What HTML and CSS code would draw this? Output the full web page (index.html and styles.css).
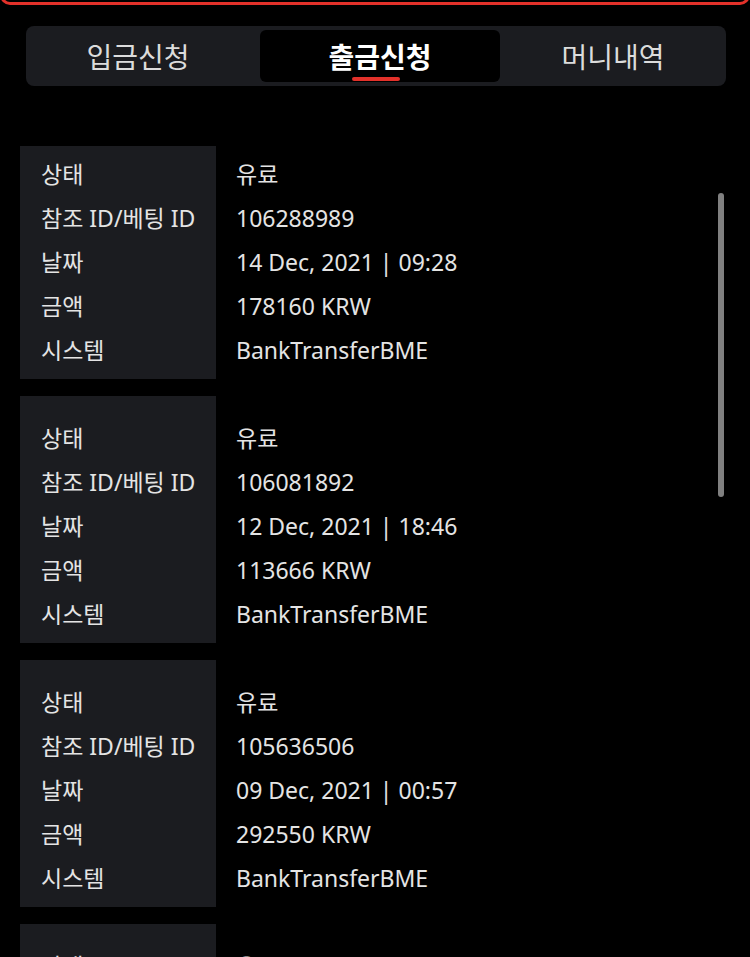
FILE: index.html
```html
<!DOCTYPE html>
<html lang="ko">
<head>
  <meta charset="UTF-8">
  <meta name="viewport" content="width=device-width, initial-scale=1.0">
  <title>출금신청</title>
  <link rel="stylesheet" href="styles.css">
</head>
<body>
  <div class="top-panel"></div>

  <nav class="tabs">
    <a class="tab tab-left">입금신청</a>
    <a class="tab active">출금신청</a>
    <a class="tab tab-right">머니내역</a>
  </nav>

  <div class="history">
    <div class="history-list">
      <div class="card">
        <div class="labels">
          <div>상태</div>
          <div>참조 ID/베팅 ID</div>
          <div>날짜</div>
          <div>금액</div>
          <div>시스템</div>
        </div>
        <div class="values">
          <div>유료</div>
          <div>106288989</div>
          <div>14 Dec, 2021 | 09:28</div>
          <div>178160 KRW</div>
          <div>BankTransferBME</div>
        </div>
      </div>

      <div class="card">
        <div class="labels">
          <div>상태</div>
          <div>참조 ID/베팅 ID</div>
          <div>날짜</div>
          <div>금액</div>
          <div>시스템</div>
        </div>
        <div class="values">
          <div>유료</div>
          <div>106081892</div>
          <div>12 Dec, 2021 | 18:46</div>
          <div>113666 KRW</div>
          <div>BankTransferBME</div>
        </div>
      </div>

      <div class="card">
        <div class="labels">
          <div>상태</div>
          <div>참조 ID/베팅 ID</div>
          <div>날짜</div>
          <div>금액</div>
          <div>시스템</div>
        </div>
        <div class="values">
          <div>유료</div>
          <div>105636506</div>
          <div>09 Dec, 2021 | 00:57</div>
          <div>292550 KRW</div>
          <div>BankTransferBME</div>
        </div>
      </div>

      <div class="card">
        <div class="labels">
          <div>상태</div>
          <div>참조 ID/베팅 ID</div>
          <div>날짜</div>
          <div>금액</div>
          <div>시스템</div>
        </div>
        <div class="values">
          <div>유료</div>
          <div>105412230</div>
          <div>07 Dec, 2021 | 21:14</div>
          <div>150000 KRW</div>
          <div>BankTransferBME</div>
        </div>
      </div>
    </div>
    <div class="scroll-thumb"></div>
  </div>
</body>
</html>
```

FILE: styles.css
```css
body {
  margin: 0;
  background: #000;
  color: #e4e4e4;
  font-family: "Noto Sans", "Noto Sans CJK KR", sans-serif;
  overflow: hidden;
}
.top-panel {
  height: 20px;
  margin-top: -21px;
  border: 3px solid #e3312a;
  border-radius: 0 0 10px 10px;
}
.tabs {
  display: grid;
  grid-template-columns: 230px 240px 1fr;
  height: 52px;
  margin: 21px 24px 0 26px;
  padding: 4px;
  background: #1b1c20;
  border-radius: 8px;
}
.tab {
  display: flex;
  align-items: center;
  justify-content: center;
  font-size: 28px;
  color: #dcdcdc;
  position: relative;
}
.tab-left {
  padding-right: 14px;
}
.tab-right {
  padding-left: 4px;
}
.tab.active {
  background: #000;
  border-radius: 6px;
  color: #fff;
  font-weight: bold;
}
.tab.active::after {
  content: "";
  position: absolute;
  left: 92px;
  bottom: 1px;
  width: 48px;
  height: 4px;
  border-radius: 2px;
  background: #e3312a;
}
.history {
  position: relative;
  height: 811px;
  margin-top: 60px;
  overflow: hidden;
}
.history-list {
  margin-top: -14px;
}
.card {
  display: grid;
  grid-template-columns: 196px 1fr;
  margin: 0 0 17px 20px;
  font-size: 23px;
  line-height: 44px;
}
.labels {
  background: #1b1c20;
  padding: 20px 0 7px 21px;
}
.values {
  padding: 20px 0 7px 20px;
}
.scroll-thumb {
  position: absolute;
  top: 47px;
  right: 26px;
  width: 6px;
  height: 304px;
  border-radius: 3px;
  background: #808080;
}
```
